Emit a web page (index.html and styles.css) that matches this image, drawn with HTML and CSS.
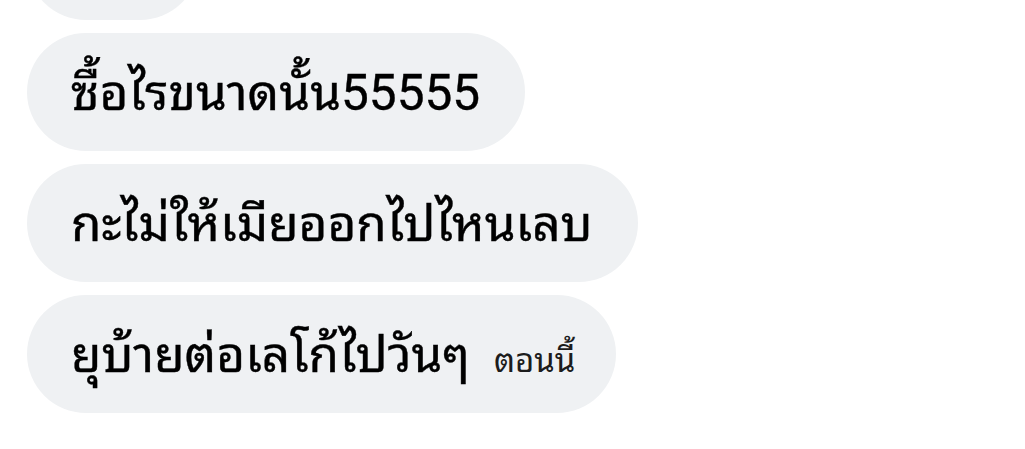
FILE: index.html
```html
<!DOCTYPE html>
<html lang="th">
<head>
<meta charset="utf-8">
<link rel="stylesheet" href="styles.css">
</head>
<body>
<div class="thread">
  <div class="bubble">555</div>
  <div class="bubble">ซื้อไรขนาดนั้น55555</div>
  <div class="bubble">กะไม่ให้เมียออกไปไหนเลบ</div>
  <div class="bubble">ยุบ้ายต่อเลโก้ไปวันๆ<span class="time">ตอนนี้</span></div>
</div>
</body>
</html>
```
FILE: styles.css
```css
html, body {
  margin: 0;
  padding: 0;
  background: #ffffff;
}
body {
  font-family: Roboto, "Noto Sans Thai Looped", sans-serif;
  color: #000;
  overflow: hidden;
}
.thread {
  display: flex;
  flex-direction: column;
  align-items: flex-start;
  gap: 13px;
  margin-top: -98px;
  padding-left: 27px;
}
.bubble {
  box-sizing: border-box;
  height: 118px;
  line-height: 115px;
  padding: 3px 45px 0 44px;
  border-radius: 59px;
  background: #eff1f3;
  font-size: 49.5px;
  font-weight: 400;
  white-space: nowrap;
  -webkit-text-stroke: 0.4px #000;
}
.time {
  font-size: 33px;
  font-weight: 400;
  margin-left: 24px;
  margin-right: -4px;
  color: #1c1c1c;
  -webkit-text-stroke: 0;
}
```
